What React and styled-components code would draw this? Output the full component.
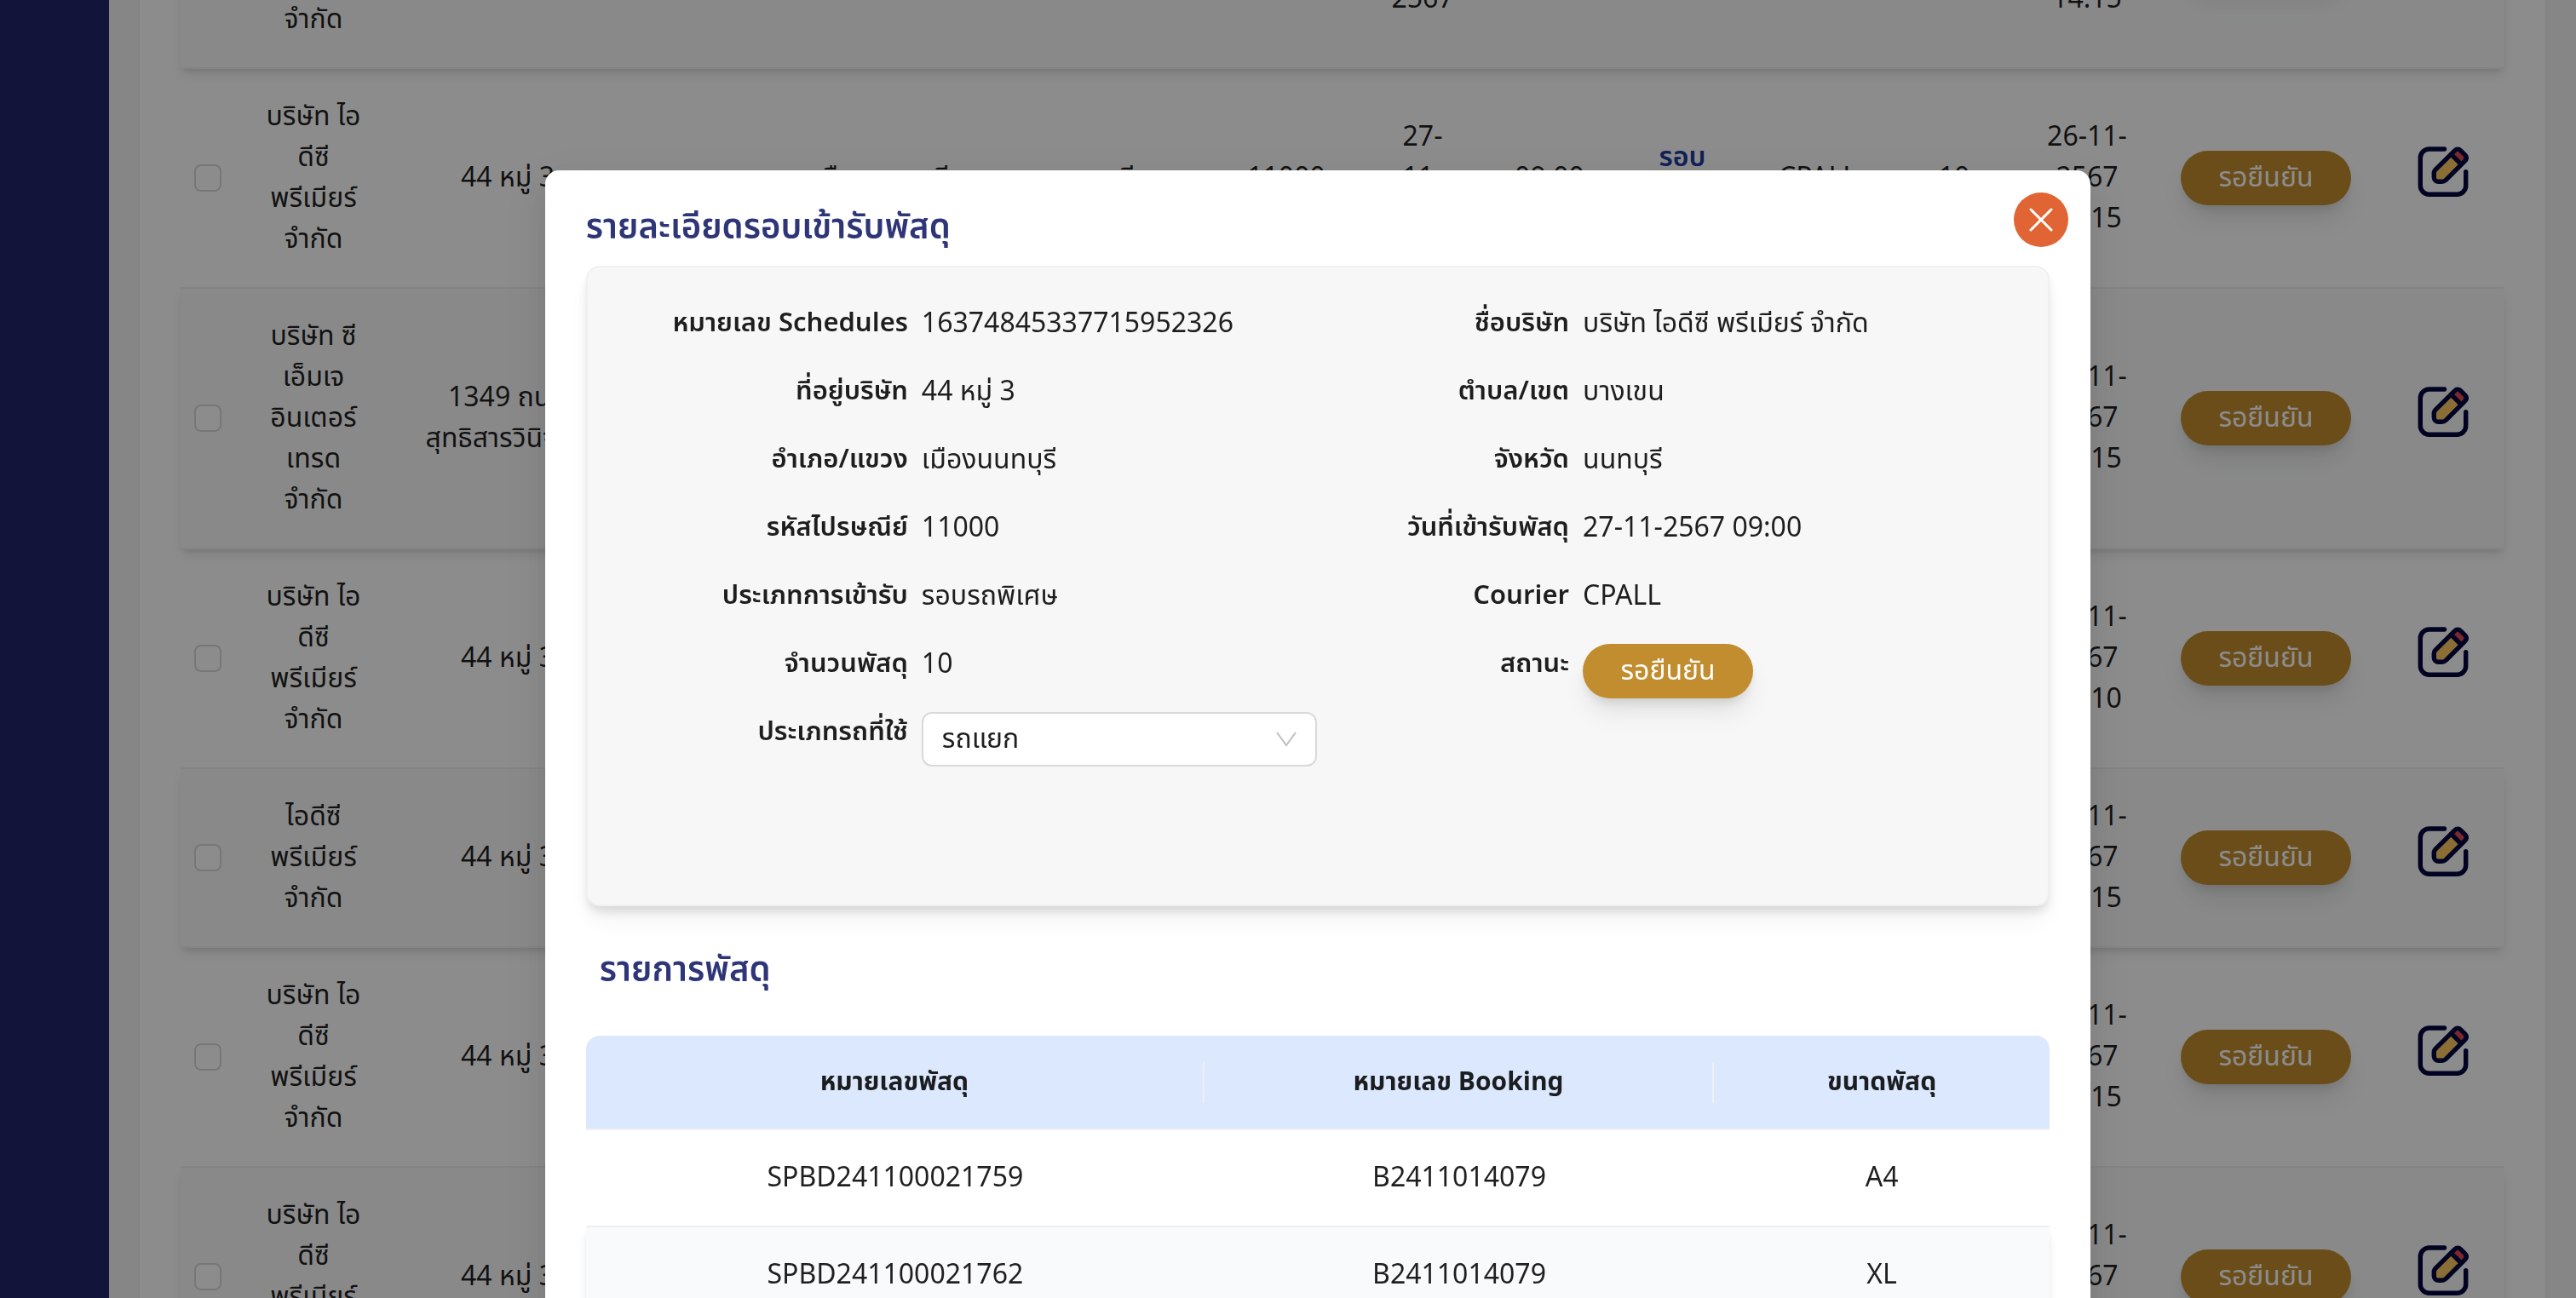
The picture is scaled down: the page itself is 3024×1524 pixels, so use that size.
import React from "react";
import styled, { createGlobalStyle, css } from "styled-components";

const GlobalStyle = createGlobalStyle`
  *, *::before, *::after { box-sizing: border-box; }
  body {
    margin: 0;
    overflow: hidden;
    font-family: "Noto Sans Thai", "Noto Sans", "Open Sans", sans-serif;
    font-size: 32px;
    line-height: 48px;
    color: rgba(0, 0, 0, 0.88);
    background: #f5f5f5;
  }
  button, select, input { font: inherit; }
  h1, h2, dl, dd { margin: 0; }
`;

const Shell = styled.div`
  display: flex;
  height: 100vh;
  overflow: hidden;
`;

const Sidebar = styled.nav`
  flex: 0 0 128px;
  background: #21256a;
`;

const Main = styled.main`
  flex: 1;
  min-width: 0;
  padding: 0 34px;
`;

const Card = styled.section`
  margin-top: -177px;
  padding: 0 48px;
  background: #ffffff;
  border: 2px solid #f0f0f0;
  border-width: 0 2px;
`;

const DataTable = styled.table`
  width: 100%;
  table-layout: fixed;
  border-collapse: separate;
  border-spacing: 0;
  text-align: center;
`;

const stripe = css`
  background: #f9fafb;
  box-shadow: 0 8px 12px -2px rgba(0, 0, 0, 0.1), 0 4px 8px -4px rgba(0, 0, 0, 0.1);
`;

const Row = styled.tr`
  ${(p) => p.$striped && stripe}
`;

const Cell = styled.td`
  padding: 32px 0;
  border-bottom: 2px solid #f0f0f0;
  white-space: nowrap;
`;

const RoundType = styled.strong`
  font-weight: 600;
  color: #1e3a9f;
`;

const Checkbox = styled.input`
  appearance: none;
  display: block;
  width: 32px;
  height: 32px;
  margin: 0 auto;
  border: 2px solid #d9d9d9;
  border-radius: 8px;
  background: #ffffff;
`;

const StatusButton = styled.button`
  display: inline-block;
  width: 200px;
  height: 64px;
  padding: 0;
  border: 0;
  border-radius: 32px;
  background: #c18d2f;
  color: #ffffff;
  vertical-align: middle;
  box-shadow: 0 20px 30px -6px rgba(0, 0, 0, 0.1), 0 8px 12px -4px rgba(0, 0, 0, 0.1);
`;

const IconButton = styled.button`
  padding: 0 0 14px;
  border: 0;
  background: none;
  vertical-align: middle;
  svg { display: block; }
`;

const Mask = styled.div`
  position: fixed;
  inset: 0;
  display: flex;
  justify-content: center;
  align-items: flex-start;
  padding: 200px 0 0 70px;
  overflow: hidden;
  background: rgba(0, 0, 0, 0.45);
`;

const Dialog = styled.div`
  position: relative;
  width: 60vw;
  padding: 44px 48px;
  border-radius: 16px;
  background: #ffffff;
  box-shadow: 0 12px 32px rgba(0, 0, 0, 0.08), 0 6px 12px -8px rgba(0, 0, 0, 0.12),
    0 18px 56px 16px rgba(0, 0, 0, 0.05);
`;

const Heading = styled.h1`
  font-size: 40px;
  line-height: 48px;
  font-weight: 600;
  color: #2f3678;
`;

const SubHeading = styled(Heading).attrs({ as: "h2" })`
  padding: 52px 16px;
`;

const CloseButton = styled.button`
  position: absolute;
  top: 26px;
  right: 26px;
  display: grid;
  place-items: center;
  width: 64px;
  height: 64px;
  padding: 0;
  border: 0;
  border-radius: 50%;
  background: #e16534;
`;

const Panel = styled.dl`
  display: grid;
  grid-template-columns: 1fr 1fr;
  grid-auto-rows: 64px;
  row-gap: 16px;
  align-content: start;
  min-height: 752px;
  margin-top: 20px;
  padding: 42px 82px 42px 80px;
  border: 2px solid #f0f0f0;
  border-radius: 16px;
  background: #f7f7f7;
  box-shadow: 0 20px 30px -6px rgba(0, 0, 0, 0.06), 0 8px 12px -2px rgba(0, 0, 0, 0.12);
`;

const Field = styled.div`
  display: grid;
  grid-template-columns: 296fr 464fr;
  column-gap: 16px;
  grid-column: ${(p) => p.$column};
`;

const Term = styled.dt`
  text-align: right;
  font-size: 31px;
  font-weight: 600;
  white-space: nowrap;
`;

const Value = styled.dd`
  white-space: nowrap;
`;

const SelectBox = styled.div`
  display: grid;
  align-items: center;
  > * { grid-area: 1 / 1; }
  svg { justify-self: end; margin-right: 24px; pointer-events: none; }
`;

const Select = styled.select`
  appearance: none;
  width: 100%;
  height: 64px;
  padding: 0 22px;
  border: 2px solid #d9d9d9;
  border-radius: 12px;
  background: #ffffff;
  color: rgba(0, 0, 0, 0.88);
`;

const HeadCell = styled.th`
  padding: 0;
  height: 111px;
  font-size: 30px;
  font-weight: 700;
  background: #dbe8fe;
  border-bottom: 2px solid #f0f0f0;
  &:first-child { border-top-left-radius: 16px; }
  &:last-child { border-top-right-radius: 16px; }
  > span { display: block; border-right: 2px solid #f0f0f0; }
  &:last-child > span { border-right: 0; }
`;

function EditIcon() {
  return (
    <svg width="60" height="60" viewBox="0 0 60 60" fill="none" stroke="#040741" strokeWidth="5.4" strokeLinecap="round" strokeLinejoin="round">
      <path d="M31.5 3H13.7C8 3 3.3 7.6 3.3 13.3V46c0 5.7 4.7 10.3 10.4 10.3h32.6c5.7 0 10.4-4.6 10.4-10.3V29.7" />
      <path fill="#fbc861" stroke="none" d="M20.500 28.500 40 9l11.500 11.500L33 39l-7 2-5-4z" />
      <path fill="#e04c50" stroke="none" d="M40.300 10.700 47 4l10 10-6.300 7z" />
      <path d="M20.600 27.600 43.600 4.800c2.200-2.200 4.900-2.200 7.100 0l5 5c2 2.200 2 4.800 0 7L33.200 39.400c-1.600 1.500-2.800 1.900-4.800 1.900h-3.800c-3 0-5.300-2.300-5.300-5.300v-4.600c0-1.600.4-2.700 1.300-3.800z" />
      <path d="m39.600 9.400 11.500 11.500" />
    </svg>
  );
}

function CloseIcon() {
  return (
    <svg width="28" height="28" viewBox="0 0 28 28" fill="none" stroke="#ffffff" strokeWidth="3" strokeLinecap="round">
      <path d="M2 2l24 24M26 2L2 26" />
    </svg>
  );
}

function ChevronIcon() {
  return (
    <svg width="24" height="18" viewBox="0 0 24 18" fill="none" stroke="#bfbfbf" strokeWidth="2">
      <path d="M1 1l11 15L23 1" />
    </svg>
  );
}

const columnWidths = [64, 184, 272, 192, 220, 280, 172, 148, 150, 162, 156, 164, 148, 272, 144];

const idc = ["บริษัท ไอ", "ดีซี", "พรีเมียร์", "จำกัด"];
const schedules = [
  { company: idc, address: ["44 หมู่ 3"], time: "14.15" },
  { company: idc, address: ["44 หมู่ 3"], time: "14.15" },
  { company: ["บริษัท ซี", "เอ็มเจ", "อินเตอร์", "เทรด", "จำกัด"], address: ["1349 ถนน", "สุทธิสารวินิจฉัย"], time: "14.15" },
  { company: idc, address: ["44 หมู่ 3"], time: "14.10" },
  { company: ["ไอดีซี", "พรีเมียร์", "จำกัด"], address: ["44 หมู่ 3"], time: "14.15" },
  { company: idc, address: ["44 หมู่ 3"], time: "14.15" },
  { company: idc, address: ["44 หมู่ 3"], time: "14.15" },
];

const details = [
  ["หมายเลข Schedules", "16374845337715952326", "ชื่อบริษัท", "บริษัท ไอดีซี พรีเมียร์ จำกัด"],
  ["ที่อยู่บริษัท", "44 หมู่ 3", "ตำบล/เขต", "บางเขน"],
  ["อำเภอ/แขวง", "เมืองนนทบุรี", "จังหวัด", "นนทบุรี"],
  ["รหัสไปรษณีย์", "11000", "วันที่เข้ารับพัสดุ", "27-11-2567 09:00"],
  ["ประเภทการเข้ารับ", "รอบรถพิเศษ", "Courier", "CPALL"],
];

const parcels = [
  ["SPBD241100021759", "B2411014079", "A4"],
  ["SPBD241100021762", "B2411014079", "XL"],
];

function Lines({ of }) {
  return of.map((line, i) => (
    <React.Fragment key={i}>
      {i > 0 && <br />}
      {line}
    </React.Fragment>
  ));
}

function Columns({ widths }) {
  return (
    <colgroup>
      {widths.map((w, i) => (
        <col key={i} width={w} />
      ))}
    </colgroup>
  );
}

function ScheduleRow({ item, striped }) {
  return (
    <Row $striped={striped}>
      <Cell><Checkbox type="checkbox" aria-label="เลือกรายการ" /></Cell>
      <Cell><Lines of={item.company} /></Cell>
      <Cell><Lines of={item.address} /></Cell>
      <Cell>บางเขน</Cell>
      <Cell>เมืองนนทบุรี</Cell>
      <Cell>นนทบุรี</Cell>
      <Cell>11000</Cell>
      <Cell><Lines of={["27-", "11-", "2567"]} /></Cell>
      <Cell>09:00</Cell>
      <Cell><RoundType><Lines of={["รอบ", "รถพิเศษ"]} /></RoundType></Cell>
      <Cell>CPALL</Cell>
      <Cell>10</Cell>
      <Cell><Lines of={["26-11-", "2567", item.time]} /></Cell>
      <Cell><StatusButton type="button">รอยืนยัน</StatusButton></Cell>
      <Cell><IconButton type="button" aria-label="แก้ไข"><EditIcon /></IconButton></Cell>
    </Row>
  );
}

function Detail({ column, term, children }) {
  return (
    <Field $column={column}>
      <Term>{term}</Term>
      <Value>{children}</Value>
    </Field>
  );
}

export default function App() {
  return (
    <>
      <GlobalStyle />
      <Shell>
        <Sidebar />
        <Main>
          <Card>
            <DataTable>
              <Columns widths={columnWidths} />
              <tbody>
                {schedules.map((item, i) => (
                  <ScheduleRow key={i} item={item} striped={i % 2 === 0} />
                ))}
              </tbody>
            </DataTable>
          </Card>
        </Main>
      </Shell>
      <Mask>
        <Dialog role="dialog" aria-modal="true" aria-labelledby="dialog-title">
          <Heading id="dialog-title">รายละเอียดรอบเข้ารับพัสดุ</Heading>
          <CloseButton type="button" aria-label="ปิด"><CloseIcon /></CloseButton>
          <Panel>
            {details.map(([leftTerm, leftValue, rightTerm, rightValue]) => (
              <React.Fragment key={leftTerm}>
                <Detail column={1} term={leftTerm}>{leftValue}</Detail>
                <Detail column={2} term={rightTerm}>{rightValue}</Detail>
              </React.Fragment>
            ))}
            <Detail column={1} term="จำนวนพัสดุ">10</Detail>
            <Detail column={2} term="สถานะ">
              <StatusButton type="button">รอยืนยัน</StatusButton>
            </Detail>
            <Detail column={1} term={<label htmlFor="vehicle">ประเภทรถที่ใช้</label>}>
              <SelectBox>
                <Select id="vehicle" defaultValue="รถแยก">
                  <option>รถแยก</option>
                </Select>
                <ChevronIcon />
              </SelectBox>
            </Detail>
          </Panel>
          <SubHeading>รายการพัสดุ</SubHeading>
          <DataTable>
            <Columns widths={[726, 598, 394]} />
            <thead>
              <tr>
                {["หมายเลขพัสดุ", "หมายเลข Booking", "ขนาดพัสดุ"].map((title) => (
                  <HeadCell key={title} scope="col"><span>{title}</span></HeadCell>
                ))}
              </tr>
            </thead>
            <tbody>
              {parcels.map((parcel, i) => (
                <Row key={parcel[0]} $striped={i % 2 === 1}>
                  {parcel.map((text) => (
                    <Cell key={text}>{text}</Cell>
                  ))}
                </Row>
              ))}
            </tbody>
          </DataTable>
        </Dialog>
      </Mask>
    </>
  );
}
